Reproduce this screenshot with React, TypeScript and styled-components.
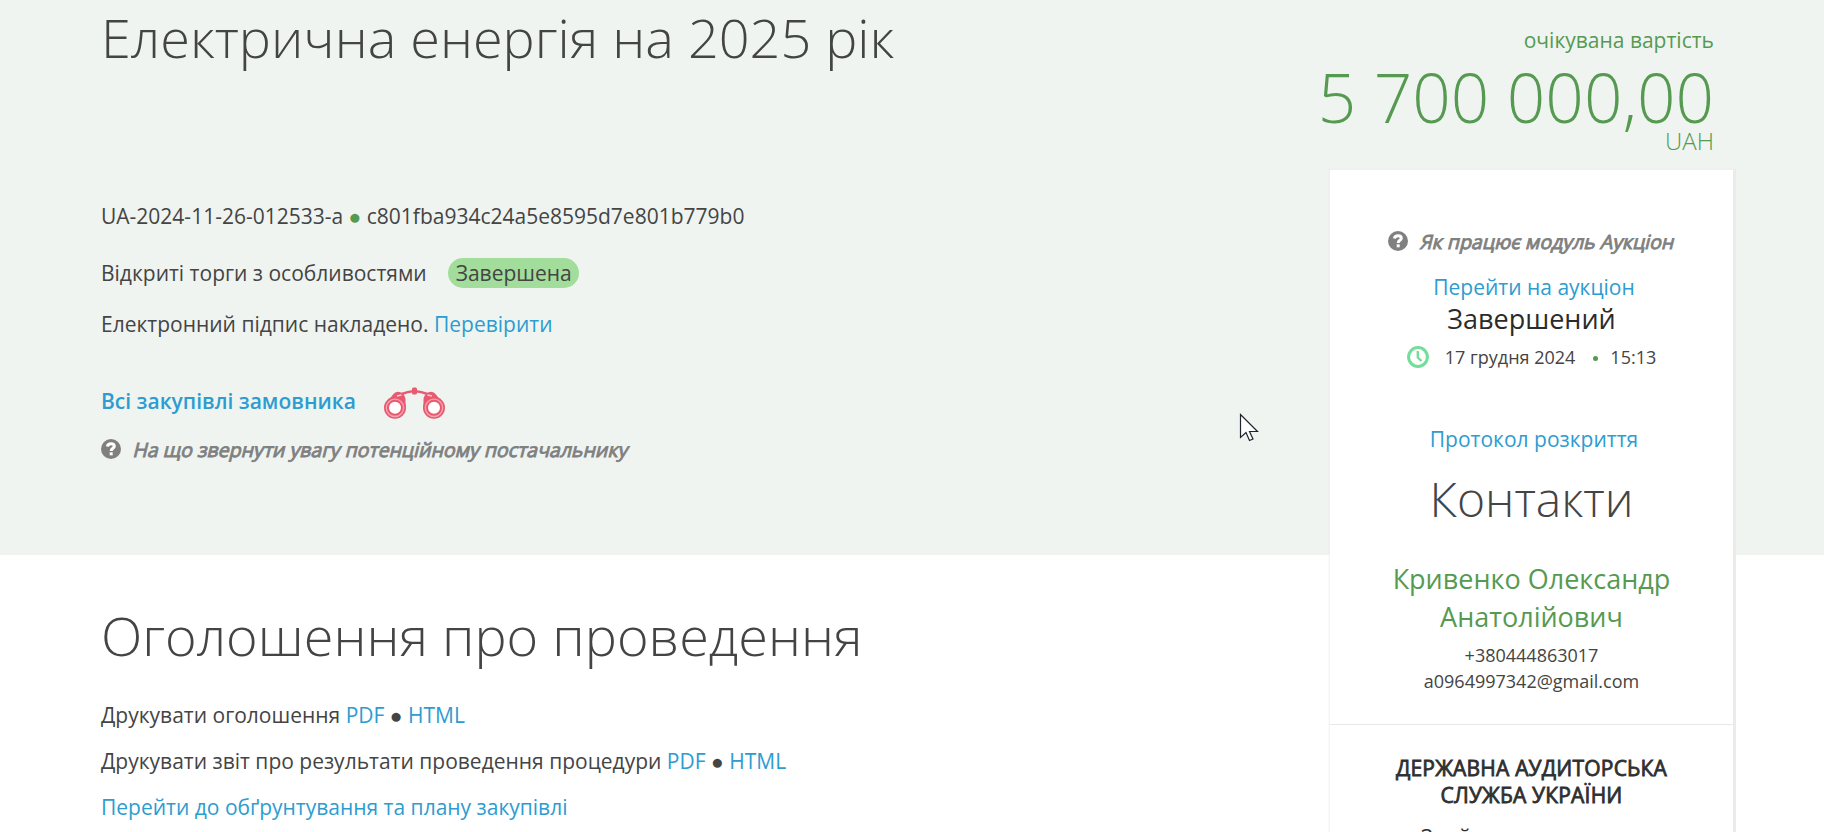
import React, { FC } from "react";
import styled, { createGlobalStyle } from "styled-components";

const GlobalStyle = createGlobalStyle`
  body {
    margin: 0;
    background: #ffffff;
    font-family: "Open Sans", "Noto Sans", sans-serif;
    color: #444444;
  }
`;

const Page = styled.main`
  position: relative;
  height: 832px;
  overflow: hidden;
`;

const Hero = styled.section`
  display: flex;
  justify-content: space-between;
  height: 555px;
  padding: 0 91px 0 101px;
  box-sizing: border-box;
  background: #eff4f1;
`;

const Title = styled.h1`
  margin: 0;
  font-size: 54px;
  font-weight: 300;
  line-height: 74px;
  white-space: nowrap;
`;

interface LineProps {
  $top?: number;
}

const Line = styled.div<LineProps>`
  display: flex;
  align-items: center;
  height: 30px;
  margin-top: ${props => props.$top || 0}px;
  font-size: 21px;
  line-height: 30px;
  white-space: pre;
`;

const CardLine = styled(Line)`
  padding-left: 5px;
`;

const Status = styled.span`
  margin-left: 21px;
  padding: 0 7px 0 8px;
  border-radius: 15px;
  background: #a2dd9b;
`;

const Link = styled.a`
  color: #2d9cd0;
  text-decoration: none;
`;

const BuyerLink = styled(Link)`
  font-weight: 600;
`;

const Green = styled.span`
  color: #569a51;
`;

const Binoculars = styled.svg`
  margin: 4px 0 0 28px;
  flex: none;
`;

const Hint = styled.div<LineProps>`
  display: flex;
  align-items: center;
  height: 28px;
  margin-top: ${props => props.$top || 0}px;
  color: #808080;
  font-size: 19.55px;
  line-height: 28px;
  white-space: nowrap;
`;

// slanted and thickened regular face
const HintText = styled.span`
  margin: 2px 0 0 13px;
  transform: skewX(-14deg);
  -webkit-text-stroke: 0.9px #808080;
`;

const Sidebar = styled.aside`
  display: flex;
  flex-direction: column;
  align-items: flex-end;
  flex: none;
  width: 403px;
`;

const PriceLabel = styled.div`
  margin: 25px 19px 0 0;
  color: #569a51;
  font-size: 21px;
  line-height: 30px;
`;

const Price = styled.div`
  margin: 6px 19px 0 0;
  color: #569a51;
  font-size: 67.5px;
  font-weight: 300;
  line-height: 72px;
  white-space: nowrap;
`;

const Currency = styled.div`
  margin: -4px 19px 0 0;
  color: #569a51;
  font-size: 24px;
  font-weight: 300;
  line-height: 24px;
`;

const Card = styled.div`
  display: flex;
  flex-direction: column;
  align-items: center;
  width: 403px;
  height: 700px;
  margin-top: 17px;
  padding-top: 57px;
  box-sizing: border-box;
  background: #ffffff;
  box-shadow: 0 0 1px 2.5px #eaebeb;
  flex: none;
  text-align: center;
`;

const AuctionState = styled.div`
  color: #2b2b2b;
  font-size: 27px;
  line-height: 34px;
`;

const AuctionDate = styled.div`
  display: flex;
  align-items: center;
  height: 24px;
  margin-top: 9px;
  font-size: 18px;
  line-height: 24px;
`;

const DateText = styled.span`
  margin-left: 16px;
`;

const Dot = styled.span`
  width: 5px;
  height: 5px;
  margin: 2px 12px 0 18px;
  border-radius: 50%;
  background: #569a51;
`;

const ContactsTitle = styled.h2`
  margin: 15px 0 0;
  font-size: 48px;
  font-weight: 300;
  line-height: 60px;
`;

const ContactName = styled.div`
  margin-top: 31px;
  color: #569a51;
  font-size: 27px;
  line-height: 38px;
`;

const ContactInfo = styled.div`
  margin-top: 6px;
  font-size: 18px;
  line-height: 26px;
`;

const Divider = styled.hr`
  width: 100%;
  height: 1px;
  margin: 30px 0;
  border: 0;
  background: #e8e8e8;
  flex: none;
`;

const Organization = styled.div`
  color: #2f2f2f;
  font-size: 21px;
  line-height: 27px;
  letter-spacing: 0.2px;
  -webkit-text-stroke: 0.8px #2f2f2f;
`;

const Role = styled.div`
  margin-top: 13px;
  color: #2f2f2f;
  font-size: 21px;
  line-height: 30px;
`;

const Announcement = styled.section`
  padding: 42px 0 0 101px;
`;

const SectionTitle = styled(Title)`
  margin-bottom: 19px;
  line-height: 76px;
`;

const PrintLine = styled.div`
  font-size: 21px;
  line-height: 46px;
  white-space: pre;
`;

const Pointer = styled.svg`
  position: absolute;
  left: 1239px;
  top: 413px;
`;

const QuestionIcon: FC = () => (
  <svg width="20" height="20" viewBox="0 0 20 20" fill="none">
    <circle cx="10" cy="10" r="10" fill="#808080" />
    <path d="M6.4 7.6C6.8 5.2 8.2 4.7 10 4.7C12 4.7 13.3 5.7 13.3 7.3C13.3 9.4 10.2 9.2 10.2 12" stroke="#fff" strokeWidth="3" />
    <rect x="8.7" y="13.3" width="3" height="3" fill="#fff" />
  </svg>
);

const ClockIcon: FC = () => (
  <svg width="22" height="22" viewBox="0 0 22 22" fill="none" stroke="#73dd99">
    <circle cx="11" cy="11" r="9.4" strokeWidth="3" />
    <path d="M10.8 5V11.5L14.5 15" strokeWidth="2.4" />
  </svg>
);

const BinocularsIcon: FC = () => (
  <Binoculars width="61" height="32" viewBox="0 0 61 32" fill="none">
    <path d="M16 7.5Q24 4.5 30.5 4Q37 4.5 45 7.5" stroke="#e85a70" strokeWidth="2.6" />
    <path d="M1 18L9 7.5Q12 3.5 17 5.5Q21.5 8 21.5 13L21.5 22ZM60 18L52 7.5Q49 3.5 44 5.5Q39.5 8 39.5 13L39.5 22Z" fill="#e85a70" />
    <path d="M13 9L17.5 8M48 9L43.5 8" stroke="#f7c8cf" strokeWidth="1.5" />
    <rect x="28" y="0.5" width="5" height="7" rx="1.5" fill="#e85a70" />
    <circle cx="11" cy="20.8" r="11" fill="#e85a70" />
    <circle cx="50" cy="20.8" r="11" fill="#e85a70" />
    <circle cx="11" cy="20.8" r="8.7" stroke="#f3a5b0" strokeWidth="1.4" />
    <circle cx="50" cy="20.8" r="8.7" stroke="#f3a5b0" strokeWidth="1.4" />
    <circle cx="11" cy="20.8" r="6" fill="#fff" />
    <circle cx="50" cy="20.8" r="6" fill="#fff" />
  </Binoculars>
);

const App: FC = () => (
  <>
    <GlobalStyle />
    <Page>
      <Hero>
        <div>
          <Title>Електрична енергія на 2025 рік</Title>
          <Line $top={127}>
            UA-2024-11-26-012533-a <Green>●</Green> c801fba934c24a5e8595d7e801b779b0
          </Line>
          <Line $top={27}>
            Відкриті торги з особливостями<Status>Завершена</Status>
          </Line>
          <Line $top={21}>
            Електронний підпис накладено. <Link>Перевірити</Link>
          </Line>
          <Line $top={47}>
            <BuyerLink>Всі закупівлі замовника</BuyerLink>
            <BinocularsIcon />
          </Line>
          <Hint $top={19}>
            <QuestionIcon />
            <HintText>На що звернути увагу потенційному постачальнику</HintText>
          </Hint>
        </div>
        <Sidebar>
          <PriceLabel>очікувана вартість</PriceLabel>
          <Price>5 700 000,00</Price>
          <Currency>UAH</Currency>
          <Card>
            <Hint>
              <QuestionIcon />
              <HintText>Як працює модуль Аукціон</HintText>
            </Hint>
            <CardLine $top={17}>
              <Link>Перейти на аукціон</Link>
            </CardLine>
            <AuctionState>Завершений</AuctionState>
            <AuctionDate>
              <ClockIcon />
              <DateText>17 грудня 2024</DateText>
              <Dot />
              15:13
            </AuctionDate>
            <CardLine $top={55}>
              <Link>Протокол розкриття</Link>
            </CardLine>
            <ContactsTitle>Контакти</ContactsTitle>
            <ContactName>
              Кривенко Олександр
              <br />
              Анатолійович
            </ContactName>
            <ContactInfo>
              +380444863017
              <br />
              a0964997342@gmail.com
            </ContactInfo>
            <Divider />
            <Organization>
              ДЕРЖАВНА АУДИТОРСЬКА
              <br />
              СЛУЖБА УКРАЇНИ
            </Organization>
            <Role>Знайти контрагентам</Role>
          </Card>
        </Sidebar>
      </Hero>
      <Announcement>
        <SectionTitle as="h2">Оголошення про проведення</SectionTitle>
        <PrintLine>
          Друкувати оголошення <Link>PDF</Link> ● <Link>HTML</Link>
        </PrintLine>
        <PrintLine>
          Друкувати звіт про результати проведення процедури <Link>PDF</Link> ● <Link>HTML</Link>
        </PrintLine>
        <PrintLine>
          <Link>Перейти до обґрунтування та плану закупівлі</Link>
        </PrintLine>
      </Announcement>
      <Pointer width="20" height="30" viewBox="0 0 20 30">
        <path d="M1.5 1.5V24.5L7 19.5L10.5 27.5L14 26L10.5 18.5H18.5Z" fill="#fff" stroke="#20242c" strokeWidth="1.2" />
      </Pointer>
    </Page>
  </>
);

export default App;
